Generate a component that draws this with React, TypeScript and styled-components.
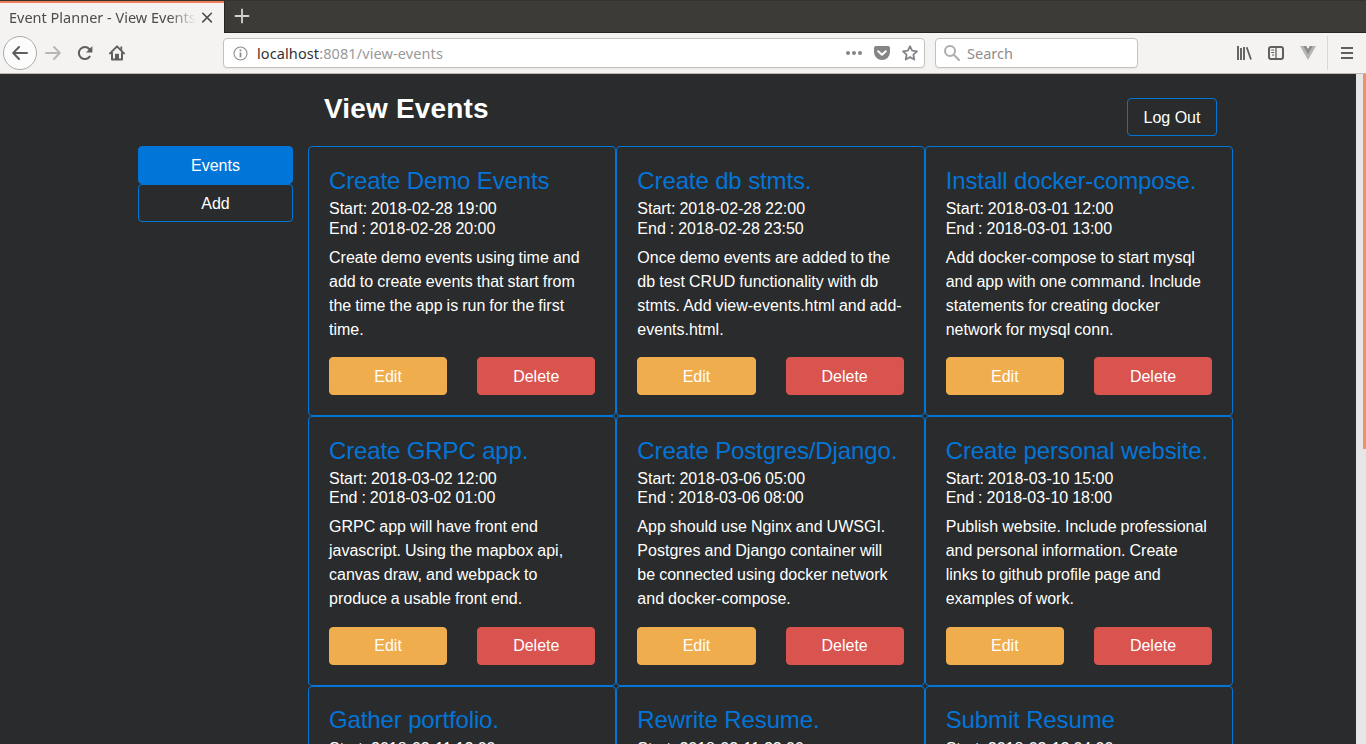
import React from "react";
import styled, { createGlobalStyle, css } from "styled-components";

const GlobalStyle = createGlobalStyle`
  *, *::before, *::after { box-sizing: border-box; }
  html, body { margin: 0; height: 100%; overflow: hidden; background: #292b2c; }
  body { font: 16px/1.5 "Liberation Sans", Arial, sans-serif; color: #fff; }
  button { font: inherit; }
`;

const chromeFont = css`
  font-family: "Noto Sans", "Open Sans", sans-serif;
  font-size: 14.5px;
  line-height: 20px;
  white-space: nowrap;
`;

const Window = styled.div`
  width: 1366px;
  height: 744px;
  display: flex;
  flex-direction: column;
  overflow: hidden;
`;

const TabStrip = styled.div`
  height: 33px;
  flex: none;
  display: flex;
  background: #3c3b37;
  border-top: 1px solid #33322f;
  border-bottom: 1px solid #262624;
`;

const Tab = styled.div`
  ${chromeFont}
  width: 224px;
  height: 32px;
  flex: none;
  display: flex;
  align-items: center;
  padding: 0 11px 0 9px;
  background: #f4f3f1;
  border-top: 2px solid #ef7d55;
  color: #4c4c4c;
`;

const TabTitle = styled.span`
  width: 187px;
  flex: none;
  overflow: hidden;
  margin-top: -3px;
  -webkit-mask-image: linear-gradient(to right, #000 160px, transparent 187px);
  mask-image: linear-gradient(to right, #000 160px, transparent 187px);
`;

const TabClose = styled.svg`
  display: block;
  margin-left: 5px;
`;

const NewTab = styled.div`
  width: 34px;
  display: flex;
  align-items: center;
  justify-content: center;
  padding-bottom: 2px;
  border-left: 1px solid #262624;
`;

const Toolbar = styled.div`
  height: 41px;
  flex: none;
  display: flex;
  align-items: center;
  background: #f4f3f1;
  border-bottom: 1px solid #bebbb7;
  color: #5f5f5f;
`;

const NavGroup = styled.div`
  width: 223px;
  flex: none;
  display: flex;
  align-items: center;
  padding: 0 0 1px 3px;
`;

const BackButton = styled.div`
  width: 34px;
  height: 34px;
  border-radius: 50%;
  border: 1px solid #adaba8;
  background: #fcfcfc;
  display: flex;
  align-items: center;
  justify-content: center;
`;

const NavIcon = styled.div<{ $left: number; $faded?: boolean }>`
  margin-left: ${(p) => p.$left}px;
  display: flex;
  color: ${(p) => (p.$faded ? "#b9b8b6" : "inherit")};
`;

const Field = styled.div<{ $width: number }>`
  ${chromeFont}
  width: ${(p) => p.$width}px;
  height: 30px;
  flex: none;
  display: flex;
  align-items: center;
  background: #fff;
  border: 1px solid #c5c2be;
  border-radius: 4px;
  box-shadow: 0 1px 1px rgba(0, 0, 0, 0.05);
  color: #8d8d8d;
`;

const UrlField = styled(Field)`
  padding: 0 6px 0 9px;
  margin-right: 10px;
  svg { display: block; }
`;

const SearchField = styled(Field)`
  padding: 0 8px;
  gap: 7px;
`;

const SearchHint = styled.span`
  padding-bottom: 1px;
`;

const Address = styled.span`
  margin-left: 9px;
  padding-bottom: 1px;
  flex: 1;
  color: #999;
  letter-spacing: 0.1px;
`;

const Host = styled.span`
  color: #333;
`;

const UrlActions = styled.div`
  display: flex;
  align-items: center;
  gap: 12px;
  color: #858585;
`;

const ToolGroup = styled.div`
  margin-left: auto;
  height: 100%;
  display: flex;
  align-items: center;
  gap: 16px;
  svg { display: block; }
`;

const MenuCell = styled.div`
  height: 34px;
  width: 39px;
  margin-left: -5px;
  display: flex;
  align-items: center;
  justify-content: center;
  border-left: 1px solid #d9d8d6;
`;

const Viewport = styled.div`
  flex: 1;
  min-height: 0;
  display: flex;
  overflow: hidden;
`;

const Page = styled.main`
  width: 1356px;
  background: #292b2c;
  overflow: hidden;
`;

const Scrollbar = styled.div`
  width: 10px;
  background: #e6e6e6;
  display: flex;
  justify-content: flex-end;
`;

const Thumb = styled.div`
  width: 3px;
  height: 375px;
  background: #f08f6b;
`;

const Container = styled.div`
  width: 1140px;
  margin: 0 auto;
  padding: 0 15px;
`;

const Header = styled.header`
  height: 72.4px;
  margin-left: 185px;
  padding: 18px 16px 0;
  display: flex;
  justify-content: space-between;
  align-items: flex-start;
`;

const Heading = styled.h1`
  margin: 0;
  font-size: 28px;
  font-weight: 700;
  line-height: 33px;
  letter-spacing: 0.16px;
`;

const Columns = styled.div`
  display: flex;
`;

type Tone = "primary" | "outline" | "warning" | "danger";
const fills: Record<Tone, [string, string]> = {
  primary: ["#0275d8", "#0275d8"],
  outline: ["transparent", "#0275d8"],
  warning: ["#f0ad4e", "#f0ad4e"],
  danger: ["#d9534f", "#d9534f"],
};

const Button = styled.button<{ $tone: Tone }>`
  height: 38px;
  padding: 0 16px;
  border: 1px solid ${(p) => fills[p.$tone][1]};
  border-radius: 4px;
  background: ${(p) => fills[p.$tone][0]};
  color: #fff;
  line-height: 24px;
  text-align: center;
  white-space: nowrap;
`;

const Sidebar = styled.nav`
  width: 185px;
  flex: none;
  padding: 0 15px;
  display: flex;
  flex-direction: column;
  ${Button} { padding-top: 1px; }
`;

const LogOut = styled(Button)`
  margin-top: 6px;
  width: 90px;
  padding: 2px 0 0;
`;

const Grid = styled.section`
  width: 925.1px;
  flex: none;
  display: grid;
  grid-template-columns: repeat(3, 1fr);
`;

const Card = styled.article`
  min-width: 0;
  height: 269.6px;
  padding: 20.55px 20px 0;
  border: 1px solid #0275d8;
  border-radius: 4px;
`;

const CardTitle = styled.h4`
  margin: 0 0 6px;
  font-size: 24px;
  font-weight: 400;
  line-height: 26.4px;
  letter-spacing: -0.13px;
  color: #0275d8;
  white-space: nowrap;
`;

const CardTime = styled.h6`
  margin: 0 0 1.8px;
  font-size: 16px;
  font-weight: 400;
  line-height: 17.6px;
  letter-spacing: -0.02px;
  word-spacing: -0.45px;
`;

const CardText = styled.p`
  margin: 8.2px 0 15.65px;
  word-spacing: -0.4px;
`;

const Actions = styled.div`
  display: grid;
  grid-template-columns: 1fr 1fr;
  gap: 30px;
  ${Button} { padding-top: 0.7px; }
`;

interface PlannerEvent {
  title: string;
  start: string;
  end: string;
  text: string;
}

const events: PlannerEvent[] = [
  { title: "Create Demo Events", start: "2018-02-28 19:00", end: "2018-02-28 20:00", text: "Create demo events using time and add to create events that start from the time the app is run for the first time." },
  { title: "Create db stmts.", start: "2018-02-28 22:00", end: "2018-02-28 23:50", text: "Once demo events are added to the db test CRUD functionality with db stmts. Add view-events.html and add-events.html." },
  { title: "Install docker-compose.", start: "2018-03-01 12:00", end: "2018-03-01 13:00", text: "Add docker-compose to start mysql and app with one command. Include statements for creating docker network for mysql conn." },
  { title: "Create GRPC app.", start: "2018-03-02 12:00", end: "2018-03-02 01:00", text: "GRPC app will have front end javascript. Using the mapbox api, canvas draw, and webpack to produce a usable front end." },
  { title: "Create Postgres/Django.", start: "2018-03-06 05:00", end: "2018-03-06 08:00", text: "App should use Nginx and UWSGI. Postgres and Django container will be connected using docker network and docker-compose." },
  { title: "Create personal website.", start: "2018-03-10 15:00", end: "2018-03-10 18:00", text: "Publish website. Include professional and personal information. Create links to github profile page and examples of work." },
  { title: "Gather portfolio.", start: "2018-03-11 12:00", end: "", text: "" },
  { title: "Rewrite Resume.", start: "2018-03-11 22:00", end: "", text: "" },
  { title: "Submit Resume", start: "2018-03-12 04:00", end: "", text: "" },
];

function EventCard({ event }: { event: PlannerEvent }) {
  return (
    <Card>
      <CardTitle>{event.title}</CardTitle>
      <CardTime>Start: {event.start}</CardTime>
      {event.end && (
        <>
          <CardTime>End : {event.end}</CardTime>
          <CardText>{event.text}</CardText>
          <Actions>
            <Button $tone="warning">Edit</Button>
            <Button $tone="danger">Delete</Button>
          </Actions>
        </>
      )}
    </Card>
  );
}

const stroke = { fill: "none", stroke: "currentColor", strokeWidth: 2, strokeLinecap: "round", strokeLinejoin: "round" } as const;

function BrowserChrome() {
  return (
    <>
      <TabStrip>
        <Tab>
          <TabTitle>Event Planner - View Events</TabTitle>
          <TabClose width="12" height="12" viewBox="0 0 12 12">
            <path d="M1.8 1.3l8.6 8.6M10.4 1.3L1.8 9.9" {...stroke} strokeWidth={1.6} />
          </TabClose>
        </Tab>
        <NewTab>
          <svg width="16" height="16" viewBox="0 0 16 16" color="#d5d3cf">
            <path d="M8 1.5v13M1.5 8h13" {...stroke} strokeWidth={1.8} />
          </svg>
        </NewTab>
      </TabStrip>
      <Toolbar>
        <NavGroup>
          <BackButton>
            <svg width="16" height="16" viewBox="0 0 16 16"><path d="M15 8H1.5M7 2L1.2 8 7 14" {...stroke} /></svg>
          </BackButton>
          <NavIcon $left={8} $faded>
            <svg width="16" height="16" viewBox="0 0 16 16"><path d="M1 8h13.5M9 2l5.8 6L9 14" {...stroke} /></svg>
          </NavIcon>
          <NavIcon $left={16}>
            <svg width="16" height="16" viewBox="0 0 16 16">
              <path d="M12.7 11.6A6 6 0 1 1 12.3 4" {...stroke} />
              <path d="M15.4 1v6.4H9z" fill="currentColor" />
            </svg>
          </NavIcon>
          <NavIcon $left={16}>
            <svg width="16" height="16" viewBox="0 0 16 16">
              <path d="M1 8.4l7-7 7 7" {...stroke} />
              <path d="M3 8v6.6h10V8" {...stroke} />
              <path d="M6 14V8.8h4V14z" fill="currentColor" />
              <path d="M11.4 1.6h1.8v4l-1.8-2z" fill="currentColor" />
            </svg>
          </NavIcon>
        </NavGroup>
        <UrlField $width={702}>
          <svg width="15" height="15" viewBox="0 0 15 15">
            <circle cx="7.5" cy="7.5" r="6.5" fill="none" stroke="currentColor" strokeWidth="1.1" />
            <path d="M7.5 6.6v4.6M7.5 3.4v1.9" stroke="currentColor" strokeWidth="1.8" />
          </svg>
          <Address><Host>localhost</Host>:8081/view-events</Address>
          <UrlActions>
            <svg width="16" height="16" viewBox="0 0 16 16" fill="currentColor">
              <circle cx="2" cy="8" r="2" /><circle cx="8" cy="8" r="2" /><circle cx="14" cy="8" r="2" />
            </svg>
            <svg width="16" height="16" viewBox="0 0 16 16">
              <path d="M2 1h12a2 2 0 0 1 2 2v4a8 8 0 0 1-16 0V3a2 2 0 0 1 2-2z" fill="currentColor" />
              <path d="M4.2 6.2L8 9.8l3.8-3.6" {...stroke} stroke="#fff" />
            </svg>
            <svg width="16" height="16" viewBox="0 0 16 16">
              <path d="M8 1.2l2.1 4.5 4.9.6-3.6 3.3.9 4.9L8 12.1l-4.3 2.4.9-4.9L1 6.3l4.9-.6z" {...stroke} strokeWidth={1.8} />
            </svg>
          </UrlActions>
        </UrlField>
        <SearchField $width={203}>
          <svg width="16" height="16" viewBox="0 0 16 16" color="#adadad">
            <circle cx="6" cy="6" r="5" {...stroke} />
            <path d="M9.8 9.8L15 15" {...stroke} />
          </svg>
          <SearchHint>Search</SearchHint>
        </SearchField>
        <ToolGroup>
          <svg width="16" height="16" viewBox="0 0 16 16" fill="none" stroke="currentColor">
            <path d="M2 1v14M8 2v13" strokeWidth="1.9" />
            <path d="M5 3v12" strokeWidth="1.9" />
            <path d="M10.7 2.3l4.3 12.2" strokeWidth="1.8" />
          </svg>
          <svg width="16" height="16" viewBox="0 0 16 16" fill="none" stroke="currentColor">
            <rect x="1" y="2" width="14" height="12" rx="2" strokeWidth="2" />
            <path d="M8 2v12" strokeWidth="1.3" />
            <path d="M3.2 5h3M3.2 7.5h3M4 10h2.2" strokeWidth="1" />
          </svg>
          <svg width="16" height="16" viewBox="0 0 16 16">
            <path d="M0 1h6l2 3.2L10 1h6L8 15z" fill="#b5b5b3" />
            <path d="M3.2 1H6.2L8 4.2 9.8 1h3L8 9.4z" fill="#8c8c8a" />
          </svg>
          <MenuCell>
            <svg width="14" height="14" viewBox="0 0 14 14">
              <path d="M1 2h12M1 7h12M1 12h12" stroke="currentColor" strokeWidth="2" />
            </svg>
          </MenuCell>
        </ToolGroup>
      </Toolbar>
    </>
  );
}

export default function App() {
  return (
    <Window>
      <GlobalStyle />
      <BrowserChrome />
      <Viewport>
        <Page>
          <Container>
            <Header>
              <Heading>View Events</Heading>
              <LogOut $tone="outline">Log Out</LogOut>
            </Header>
            <Columns>
              <Sidebar>
                <Button $tone="primary">Events</Button>
                <Button $tone="outline">Add</Button>
              </Sidebar>
              <Grid>
                {events.map((event) => (
                  <EventCard key={event.title} event={event} />
                ))}
              </Grid>
            </Columns>
          </Container>
        </Page>
        <Scrollbar><Thumb /></Scrollbar>
      </Viewport>
    </Window>
  );
}
